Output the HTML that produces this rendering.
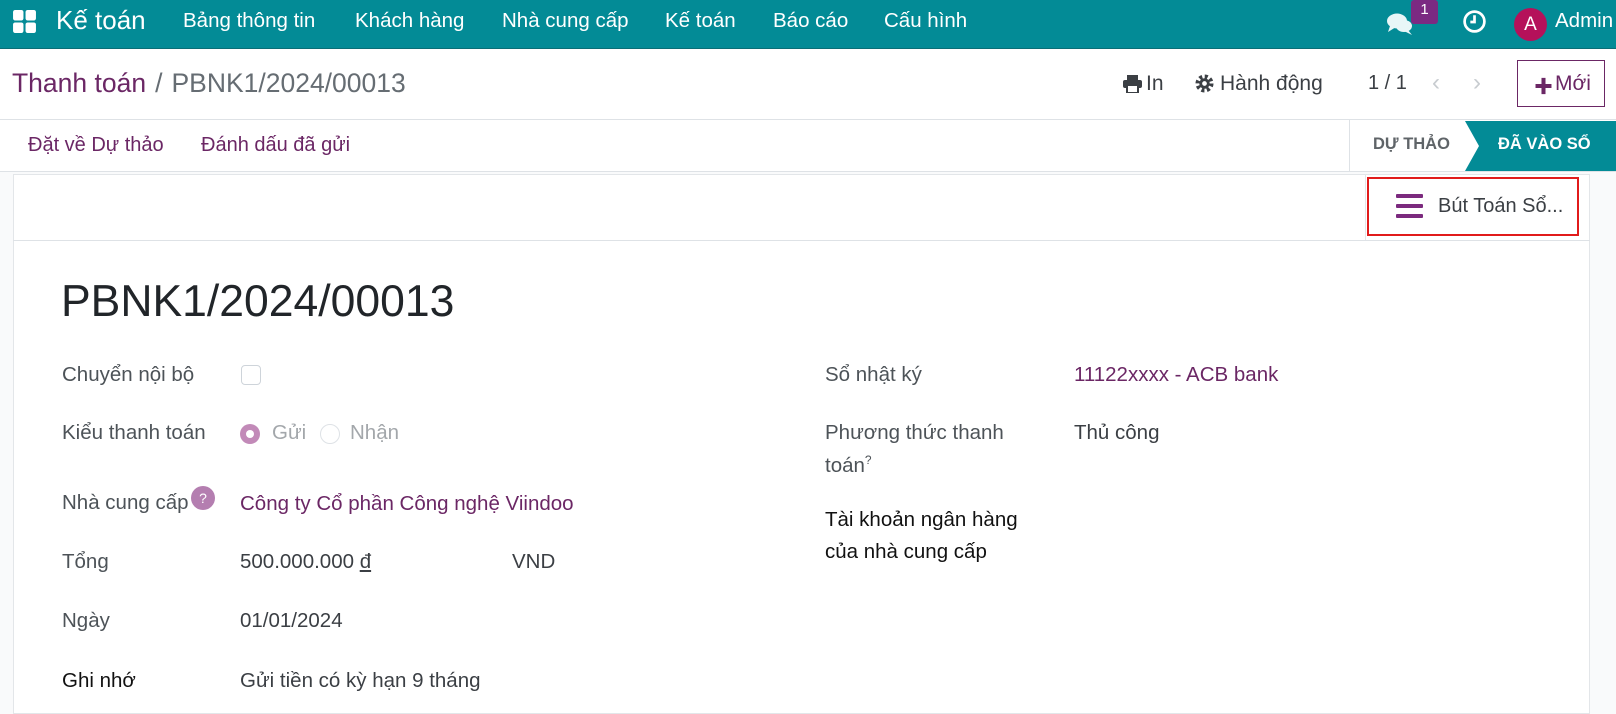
<!DOCTYPE html>
<html><head><meta charset="utf-8"><style>
*{margin:0;padding:0;box-sizing:border-box}
body{width:1616px;height:711px;overflow:hidden;background:#f9fafb;font-family:"Liberation Sans","Noto Sans CJK SC",sans-serif;position:relative;color:#212529}
.a{position:absolute;white-space:nowrap}
.hd{position:absolute;left:0;top:0;width:1616px;height:49px;background:#038b96;border-bottom:1px solid #0a6e76}
.hd .a{color:#fff;font-size:20.5px;top:9px}
.cp{position:absolute;left:0;top:49px;width:1616px;height:123px;background:#fff;border-bottom:1px solid #dee2e6}
.pur{color:#6b2765}
.lbl{font-size:20.5px;color:#4d5358}
.val{font-size:20.5px;color:#3b3f44}
</style></head><body>
<div class="hd">
  <svg class="a" style="left:12px;top:9px" width="25" height="25" viewBox="0 0 24 24" fill="#fff"><rect x="1" y="1" width="10" height="10" rx="2"/><rect x="13" y="1" width="10" height="10" rx="2"/><rect x="1" y="13" width="10" height="10" rx="2"/><rect x="13" y="13" width="10" height="10" rx="2"/></svg>
  <div class="a" style="left:56px;top:5px;font-size:26px">Kế toán</div>
  <div class="a" style="left:183px">Bảng thông tin</div>
  <div class="a" style="left:355px">Khách hàng</div>
  <div class="a" style="left:502px">Nhà cung cấp</div>
  <div class="a" style="left:665px">Kế toán</div>
  <div class="a" style="left:773px">Báo cáo</div>
  <div class="a" style="left:884px">Cấu hình</div>
  <svg class="a" style="left:1386px;top:12px" width="28" height="24" viewBox="0 0 28 24" fill="#e8f6f7"><ellipse cx="11" cy="9" rx="10" ry="7.5"/><path d="M4 14 L2 20 L10 15Z"/><ellipse cx="18" cy="14" rx="8" ry="6"/><path d="M22 18 L26 23 L18 19Z"/></svg>
  <div class="a" style="left:1411px;top:0;width:27px;height:24px;background:#7b2a82;border-radius:3px;text-align:center;font-size:15px;line-height:20px">1</div>
  <svg class="a" style="left:1462px;top:9px" width="25" height="25" viewBox="0 0 24 24" fill="none" stroke="#fff" stroke-width="2.6"><circle cx="12" cy="12" r="9.5"/><path d="M12 6v6.5h-4"/></svg>
  <div class="a" style="left:1514px;top:8px;width:33px;height:33px;border-radius:50%;background:#b5115a;text-align:center;line-height:33px;font-size:19px;color:#fff">A</div>
  <div class="a" style="left:1555px">Admin</div>
</div>
<div class="cp">
  <div class="a" style="left:12px;top:19px;font-size:26.5px"><span class="pur">Thanh toán</span><span style="color:#666d73;padding:0 9px">/</span><span style="color:#666d73">PBNK1/2024/00013</span></div>
  <svg class="a" style="left:1123px;top:26px" width="19" height="18" viewBox="0 0 19 18" fill="#3b3f44"><rect x="4" y="0" width="11" height="5"/><rect x="0" y="5" width="19" height="8" rx="2"/><rect x="4" y="10" width="11" height="8" fill="#fff" stroke="#3b3f44" stroke-width="2"/></svg>
  <div class="a" style="left:1146px;top:23px;font-size:21px;color:#3b3f44">In</div>
  <svg class="a" style="left:1195px;top:25px" width="19" height="19" viewBox="0 0 20 20"><circle cx="10" cy="10" r="7" fill="none" stroke="#3b3f44" stroke-width="5" stroke-dasharray="3 2.5"/><circle cx="10" cy="10" r="5.5" fill="#3b3f44"/><circle cx="10" cy="10" r="2.5" fill="#fff"/></svg>
  <div class="a" style="left:1220px;top:23px;font-size:21px;color:#3b3f44">Hành động</div>
  <div class="a" style="left:1368px;top:23px;font-size:20px;color:#3b3f44">1 / 1</div>
  <div class="a" style="left:1432px;top:20px;font-size:24px;color:#c8ccd0">&#x2039;</div>
  <div class="a" style="left:1473px;top:20px;font-size:24px;color:#c8ccd0">&#x203A;</div>
  <div class="a" style="left:1517px;top:11px;width:88px;height:47px;border:1px solid #6b2765;background:#fff"></div>
  <div class="a pur" style="left:1534px;top:23px;font-size:19px;font-weight:bold">✚</div>
  <div class="a pur" style="left:1555px;top:23px;font-size:21px">Mới</div>
  <div class="a" style="left:0;top:70px;width:1616px;height:1px;background:#dee2e6"></div>
  <div class="a pur" style="left:28px;top:85px;font-size:20px">Đặt về Dự thảo</div>
  <div class="a pur" style="left:201px;top:85px;font-size:20px">Đánh dấu đã gửi</div>
  <div class="a" style="left:1349px;top:71px;width:1px;height:51px;background:#dee2e6"></div>
  <div class="a" style="left:1373px;top:86px;font-size:16.5px;font-weight:bold;color:#5f6468">DỰ THẢO</div>
  <svg class="a" style="left:1465px;top:72px" width="151" height="50"><path d="M0 0 H151 V50 H0 L14 25 Z" fill="#038b96"/></svg>
  <div class="a" style="left:1498px;top:86px;font-size:16.5px;font-weight:bold;color:#fff">ĐÃ VÀO SỔ</div>
</div>
<div class="a" style="left:13px;top:174px;width:1577px;height:540px;background:#fff;border:1px solid #e3e6e9"></div>
<div class="a" style="left:13px;top:240px;width:1577px;height:1px;background:#dee2e6"></div>
<div class="a" style="left:1365px;top:175px;width:1px;height:65px;background:#e3e6e9"></div>
<div class="a" style="left:1367px;top:177px;width:212px;height:59px;border:2px solid #e11b1b"></div>
<svg class="a" style="left:1396px;top:194px" width="27" height="24" viewBox="0 0 27 24" fill="#7b2a7e"><rect y="0" width="27" height="4" rx="1"/><rect y="10" width="27" height="4" rx="1"/><rect y="20" width="27" height="4" rx="1"/></svg>
<div class="a" style="left:1438px;top:195px;font-size:20px;color:#3b3f44">Bút Toán Sổ...</div>

<div class="a" style="left:61px;top:277px;font-size:44.5px;color:#212529">PBNK1/2024/00013</div>

<div class="a lbl" style="left:62px;top:363px">Chuyển nội bộ</div>
<div class="a" style="left:241px;top:365px;width:20px;height:20px;border:1px solid #ced4da;border-radius:4px"></div>
<div class="a lbl" style="left:62px;top:421px">Kiểu thanh toán</div>
<div class="a" style="left:240px;top:424px;width:20px;height:20px;border-radius:50%;background:#c28ab8"><div style="position:absolute;left:6px;top:6px;width:8px;height:8px;border-radius:50%;background:#fff"></div></div>
<div class="a" style="left:272px;top:421px;font-size:20.5px;color:#a3a7ab">Gửi</div>
<div class="a" style="left:320px;top:424px;width:20px;height:20px;border-radius:50%;border:1px solid #dee2e6"></div>
<div class="a" style="left:350px;top:421px;font-size:20.5px;color:#a3a7ab">Nhận</div>
<div class="a lbl" style="left:62px;top:491px">Nhà cung cấp</div>
<div class="a" style="left:191px;top:486px;width:24px;height:24px;border-radius:50%;background:#b47eb0;color:#fff;font-size:14px;text-align:center;line-height:24px">?</div>
<div class="a pur" style="left:240px;top:492px;font-size:20.5px">Công ty Cổ phần Công nghệ Viindoo</div>
<div class="a lbl" style="left:62px;top:550px">Tổng</div>
<div class="a val" style="left:240px;top:550px">500.000.000 <u>đ</u></div>
<div class="a val" style="left:512px;top:550px">VND</div>
<div class="a lbl" style="left:62px;top:609px">Ngày</div>
<div class="a val" style="left:240px;top:609px">01/01/2024</div>
<div class="a" style="left:62px;top:669px;font-size:20.5px;color:#111">Ghi nhớ</div>
<div class="a val" style="left:240px;top:669px">Gửi tiền có kỳ hạn 9 tháng</div>

<div class="a lbl" style="left:825px;top:363px">Sổ nhật ký</div>
<div class="a pur" style="left:1074px;top:363px;font-size:20.5px">11122xxxx - ACB bank</div>
<div class="a lbl" style="left:825px;top:421px">Phương thức thanh</div>
<div class="a lbl" style="left:825px;top:453px">toán<sup style="font-size:12px">?</sup></div>
<div class="a val" style="left:1074px;top:421px">Thủ công</div>
<div class="a" style="left:825px;top:508px;font-size:20.5px;color:#111">Tài khoản ngân hàng</div>
<div class="a" style="left:825px;top:540px;font-size:20.5px;color:#111">của nhà cung cấp</div>
</body></html>
